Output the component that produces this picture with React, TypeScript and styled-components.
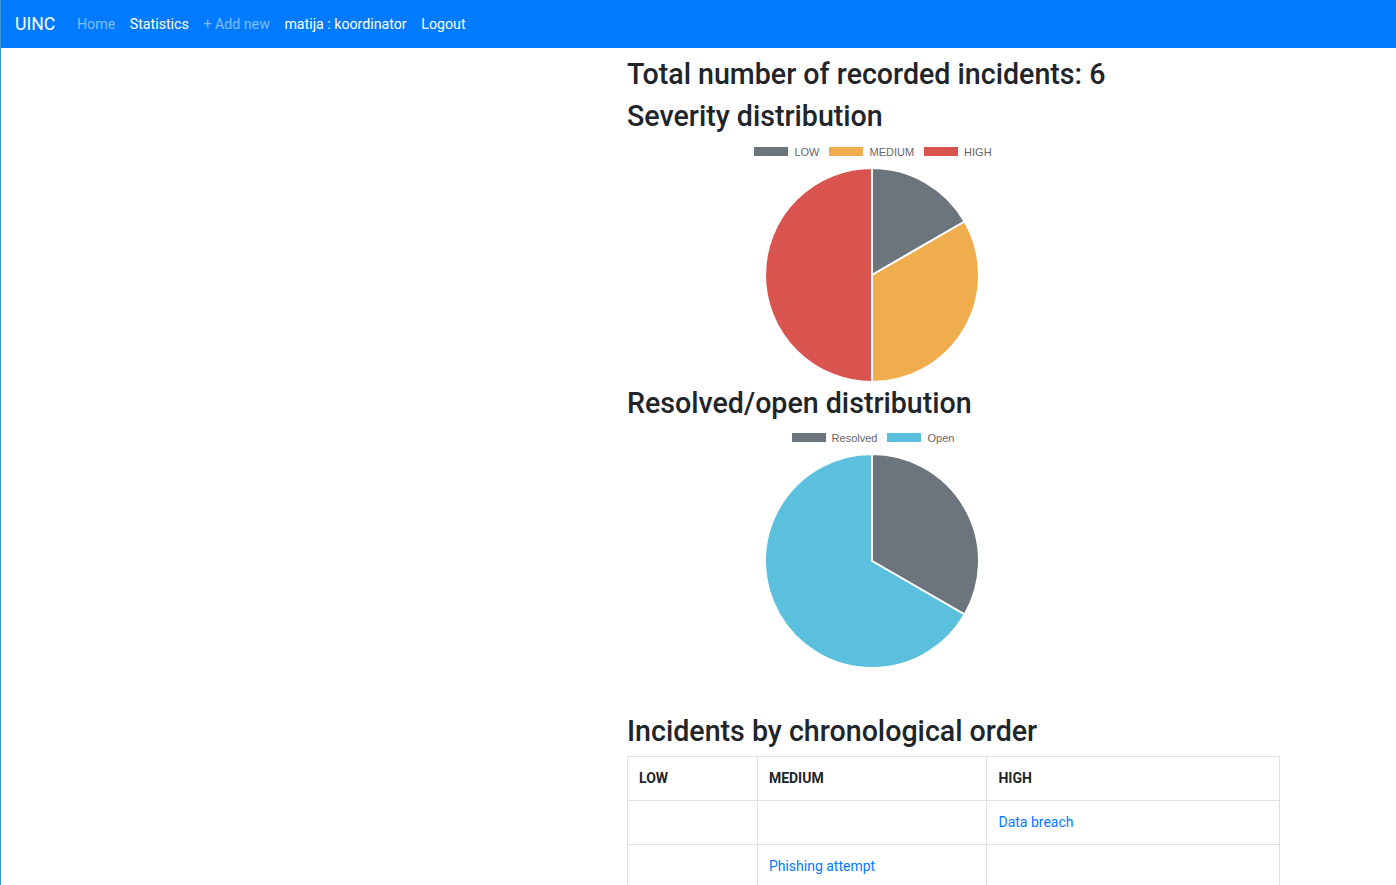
import React from "react";
import styled, { createGlobalStyle } from "styled-components";

const GlobalStyle = createGlobalStyle`
  html, body { margin: 0; padding: 0; }
  body {
    font-family: Roboto, "Noto Sans", "Liberation Sans", sans-serif;
    color: #212529;
    background: #fff;
    border-left: 1px solid #3d9ad1;
    min-height: 100vh;
    box-sizing: border-box;
  }
`;

const Navbar = styled.nav`
  height: 48px;
  background: #007bff;
  display: flex;
  align-items: center;
  padding: 0 14px;
`;

const Brand = styled.a`
  color: #fff;
  font-size: 17.6px;
  margin-right: 14.5px;
  text-decoration: none;
`;

const NavLink = styled.a<{ $muted?: boolean }>`
  color: ${(p) => (p.$muted ? "rgba(255,255,255,0.5)" : "#fff")};
  font-size: 14.2px;
  padding: 0 7.3px;
  text-decoration: none;
`;

const Layout = styled.div`
  display: grid;
  grid-template-columns: 626px 653px;
  padding-top: 9px;
`;

const Content = styled.main`
  grid-column: 2;
  display: flex;
  flex-direction: column;
`;

const Heading = styled.h3<{ $gap?: number }>`
  font-size: 28.6px;
  font-weight: 500;
  line-height: 1.2;
  margin: ${(p) => p.$gap ?? 0}px 0 8px;
`;

const Chart = styled.div`
  width: 488px;
  height: 244px;
  display: flex;
  flex-direction: column;
  align-items: center;
`;

const Legend = styled.div`
  height: 20px;
  display: flex;
  align-items: center;
  justify-content: center;
  gap: 10px;
  font-family: "Liberation Sans", Arial, sans-serif;
  font-size: 11px;
  color: #666;
  padding-left: 4px;
`;

const LegendItem = styled.span`
  display: flex;
  align-items: center;
  gap: 6px;
`;

const Swatch = styled.span<{ $color: string }>`
  width: 34px;
  height: 9px;
  background: ${(p) => p.$color};
`;

const Table = styled.table`
  border-collapse: collapse;
  width: 653px;
  font-size: 14px;
  th, td {
    border: 1px solid #dee2e6;
    padding: 11px 11px;
    line-height: 21px;
    text-align: left;
    vertical-align: top;
    height: 21px;
  }
  th { font-weight: 700; }
`;

const Link = styled.a`
  color: #007bff;
  text-decoration: none;
`;

type Slice = { label: string; value: number; color: string };

function slicePath(cx: number, cy: number, r: number, a0: number, a1: number) {
  const p = (a: number) => [cx + r * Math.sin(a), cy - r * Math.cos(a)];
  const [x0, y0] = p(a0);
  const [x1, y1] = p(a1);
  const large = a1 - a0 > Math.PI ? 1 : 0;
  return `M${cx},${cy} L${x0},${y0} A${r},${r} 0 ${large} 1 ${x1},${y1} Z`;
}

function PieChart({ data }: { data: Slice[] }) {
  const total = data.reduce((s, d) => s + d.value, 0);
  let acc = 0;
  const cx = 245;
  const cy = 113;
  const r = 107;
  return (
    <Chart>
      <Legend>
        {data.map((d) => (
          <LegendItem key={d.label}>
            <Swatch $color={d.color} />
            {d.label}
          </LegendItem>
        ))}
      </Legend>
      <svg width="488" height="224" viewBox="0 0 488 224">
        {data.map((d) => {
          const a0 = (acc / total) * Math.PI * 2;
          acc += d.value;
          const a1 = (acc / total) * Math.PI * 2;
          return (
            <path
              key={d.label}
              d={slicePath(cx, cy, r, a0, a1)}
              fill={d.color}
              stroke="#fff"
              strokeWidth="2"
              strokeLinejoin="round"
            />
          );
        })}
      </svg>
    </Chart>
  );
}

const severity: Slice[] = [
  { label: "LOW", value: 1, color: "#6c757d" },
  { label: "MEDIUM", value: 2, color: "#f0ad4e" },
  { label: "HIGH", value: 3, color: "#d9534f" },
];

const status: Slice[] = [
  { label: "Resolved", value: 2, color: "#6c757d" },
  { label: "Open", value: 4, color: "#5bc0de" },
];

const rows: [string, string, string][] = [
  ["", "", "Data breach"],
  ["", "Phishing attempt", ""],
  ["", "", "Malware infection"],
  ["Suspicious login", "", ""],
  ["", "", "Ransomware"],
  ["", "Lost device", ""],
];

export default function App() {
  return (
    <>
      <GlobalStyle />
      <Navbar>
        <Brand href="#">UINC</Brand>
        <NavLink href="#" $muted>Home</NavLink>
        <NavLink href="#">Statistics</NavLink>
        <NavLink href="#" $muted>+ Add new</NavLink>
        <NavLink href="#">matija : koordinator</NavLink>
        <NavLink href="#">Logout</NavLink>
      </Navbar>
      <Layout>
        <Content>
          <Heading>Total number of recorded incidents: 6</Heading>
          <Heading>Severity distribution</Heading>
          <PieChart data={severity} />
          <Heading>Resolved/open distribution</Heading>
          <PieChart data={status} />
          <Heading $gap={42}>Incidents by chronological order</Heading>
          <Table>
            <colgroup>
              <col style={{ width: 130 }} />
              <col style={{ width: 230 }} />
              <col style={{ width: 293 }} />
            </colgroup>
            <thead>
              <tr>
                <th>LOW</th>
                <th>MEDIUM</th>
                <th>HIGH</th>
              </tr>
            </thead>
            <tbody>
              {rows.map((r, i) => (
                <tr key={i}>
                  {r.map((c, j) => (
                    <td key={j}>{c && <Link href="#">{c}</Link>}</td>
                  ))}
                </tr>
              ))}
            </tbody>
          </Table>
        </Content>
      </Layout>
    </>
  );
}
